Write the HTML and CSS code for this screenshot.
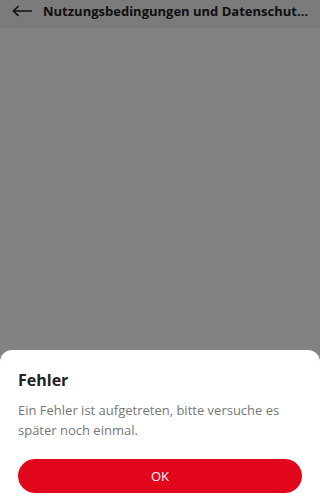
FILE: index.html
```html
<!DOCTYPE html>
<html lang="de">
<head>
<meta charset="utf-8">
<link rel="stylesheet" href="styles.css">
</head>
<body>
<div class="screen">
  <header class="topbar">
    <svg class="back" width="20" height="14" viewBox="0 0 20 14"><path d="M19.5 7H1.2M6 2.6L1.2 7L6 11.4" fill="none" stroke="#222" stroke-width="1.5" stroke-linecap="round" stroke-linejoin="round"/></svg>
    <div class="title">Nutzungsbedingungen und Datenschutzhinweise</div>
  </header>
  <main class="content"></main>
  <div class="overlay"></div>
  <div class="sheet">
    <h2 class="sheet-title">Fehler</h2>
    <p class="sheet-text">Ein Fehler ist aufgetreten, bitte versuche es später noch einmal.</p>
    <button class="btn">OK</button>
  </div>
</div>
</body>
</html>
```
FILE: styles.css
```css
html, body { margin: 0; padding: 0; }
body { font-family: "Open Sans", "Noto Sans", sans-serif; background: #fff; }
.screen { position: relative; width: 100vw; height: 100vh; overflow: hidden; display: flex; flex-direction: column; background: #fff; }
.topbar { height: 28px; display: flex; align-items: flex-start; padding: 3px 0 0 12px; box-sizing: border-box; background: #f2f2f2; gap: 11px; }
.back { margin-top: 1px; flex: none; }
.title { font-size: 13px; font-weight: 700; color: #222; white-space: nowrap; overflow: hidden; text-overflow: ellipsis; line-height: 17px; padding-right: 10px; }
.content { flex: 1; background: #fff; }
.overlay { position: absolute; inset: 0; background: rgba(0,0,0,0.49); }
.sheet { position: absolute; left: 0; right: 0; bottom: 0; height: 150px; background: #fff; border-radius: 12px 12px 0 0; padding: 20px 18px 0; box-sizing: border-box; }
.sheet-title { margin: 0; font-size: 16px; font-weight: 700; color: #222; line-height: 20px; }
.sheet-text { margin: 10px 0 0; font-size: 13px; color: #777; line-height: 20px; }
.btn { display: block; margin-top: 19px; width: 100%; height: 34px; border: none; border-radius: 17px; background: #e2071a; color: #fff; font-family: inherit; font-size: 13px; }
```
